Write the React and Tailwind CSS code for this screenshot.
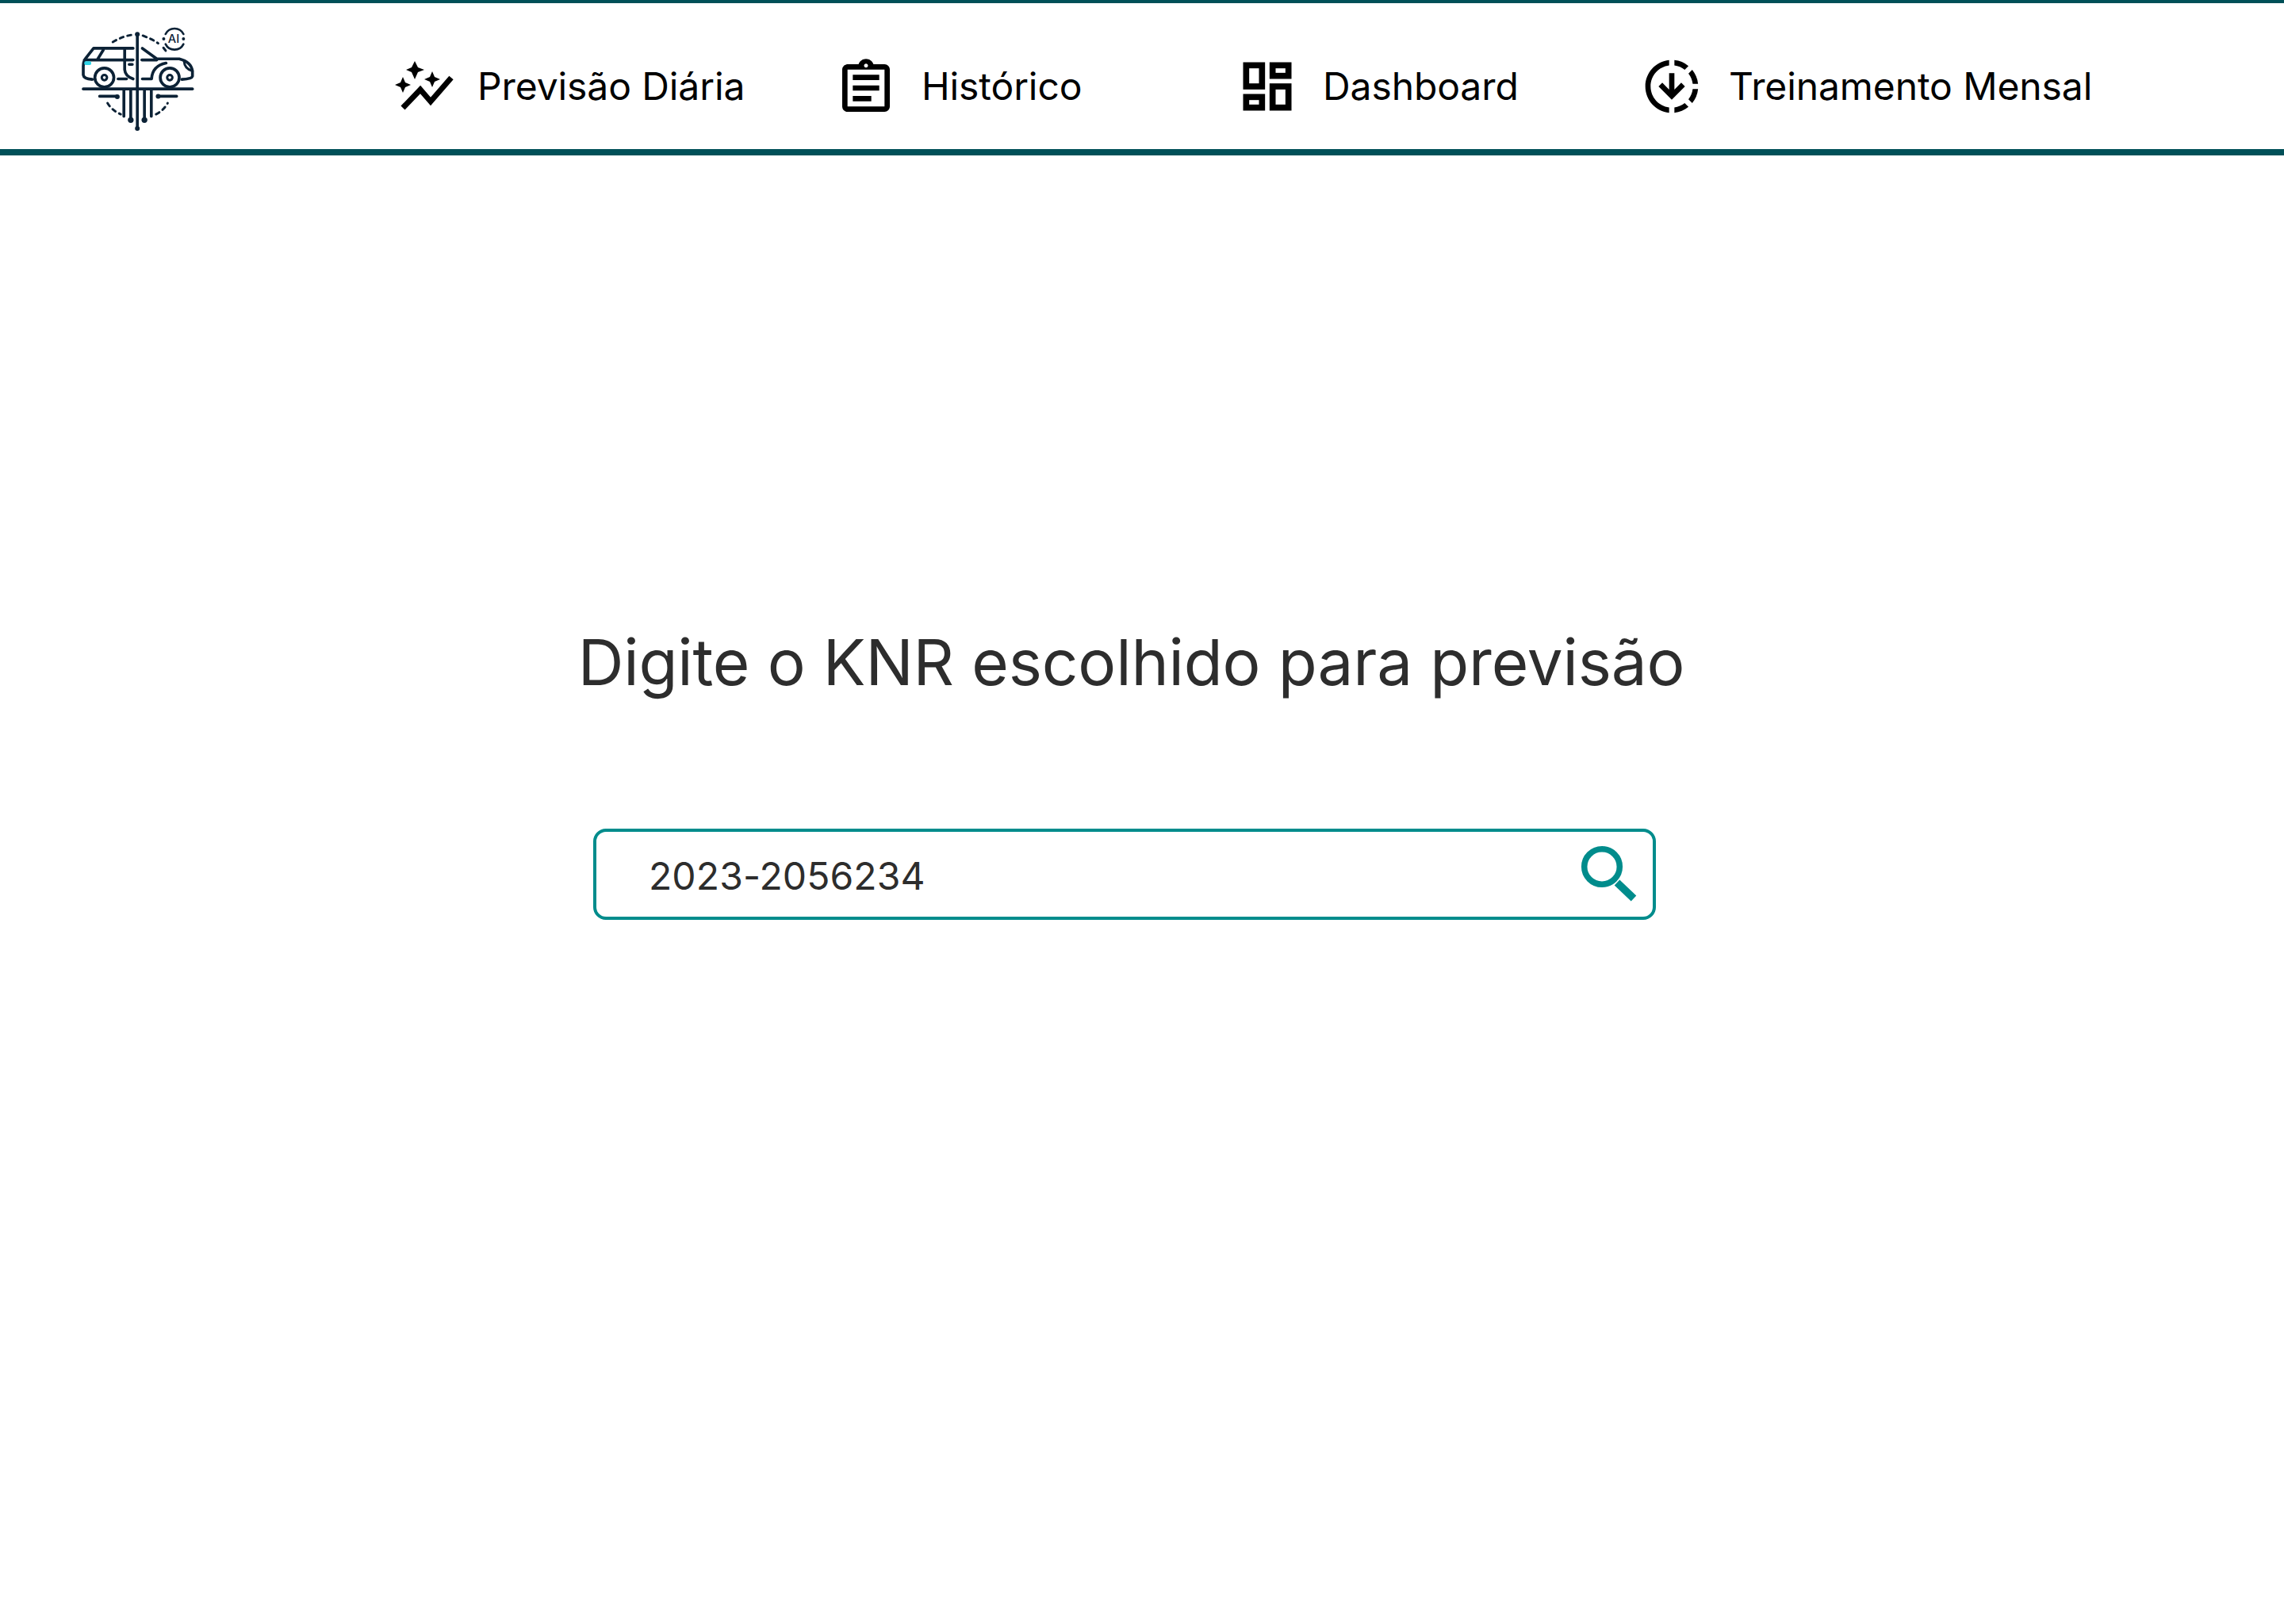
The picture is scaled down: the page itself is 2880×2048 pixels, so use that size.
import React from 'react';
import { MdOutlineAssignment, MdOutlineDownloading } from 'react-icons/md';

function Logo() {
  return (
    <svg viewBox="130 100 430 400" className="w-[143px] h-[133px] shrink-0" fill="none" stroke="#0c2236" strokeWidth="11" strokeLinecap="round" strokeLinejoin="round">
      {/* dashed arc */}
      <path d="M248 160 Q290 135 330 132 M362 136 Q400 150 420 165 M440 182 L456 203" strokeWidth="9" strokeDasharray="14 16" />
      <path d="M228 392 Q245 420 278 434 M412 434 Q440 420 456 392" strokeWidth="9" strokeDasharray="14 16" />
      {/* centre line */}
      <path d="M341 132 V488" />
      <circle cx="341" cy="131" r="9" fill="#0c2236" stroke="none" />
      <circle cx="341" cy="488" r="9" fill="#0c2236" stroke="none" />
      {/* car left half */}
      <path d="M325 184 H175 L145 222 Q136 234 136 252 V285 Q138 300 170 302 M212 190 L190 226 M140 228 H325 M293 190 V265 Q295 290 325 300 M310 245 H322" />
      <path d="M268 300 H300" />
      <circle cx="216" cy="295" r="36" fill="#fff" />
      <circle cx="216" cy="295" r="10" strokeWidth="9" />
      <rect x="140" y="233" width="26" height="14" rx="5" fill="#2fd5e8" stroke="none" />
      {/* car right half */}
      <path d="M360 184 L415 224 H500 Q545 235 550 270 V290 Q548 300 510 302 M358 228 H415 M360 300 H395 Q398 250 450 240" />
      <path d="M518 232 Q520 262 550 270" strokeWidth="9" />
      <circle cx="464" cy="295" r="36" fill="#fff" />
      <circle cx="464" cy="295" r="10" strokeWidth="9" />
      {/* circuit lines */}
      <path d="M136 338 H550" />
      <path d="M290 340 V442 M316 340 V456 M368 340 V456 M394 340 V442" />
      <path d="M198 366 H264 M420 366 H490" />
      <circle cx="265" cy="368" r="9" fill="#0c2236" stroke="none" />
      <circle cx="420" cy="366" r="9" fill="#0c2236" stroke="none" />
      <circle cx="316" cy="456" r="11" fill="#0c2236" stroke="none" />
      <circle cx="368" cy="456" r="11" fill="#0c2236" stroke="none" />
      {/* AI badge */}
      <path d="M448 130 A38 38 0 0 1 516 130 M516 168 A38 38 0 0 1 448 168" strokeWidth="8" />
      <circle cx="441" cy="148" r="6" fill="#0c2236" stroke="none" />
      <circle cx="516" cy="148" r="6" fill="#0c2236" stroke="none" />
      <text x="479" y="164" textAnchor="middle" fontFamily="Inter, sans-serif" fontSize="44" fontWeight="500" fill="#0c2236" stroke="none">AI</text>
    </svg>
  );
}

function AutoGraphIcon() {
  return (
    <svg viewBox="5 10 80 80" className="w-[80px] h-[80px] shrink-0" fill="#000">
      <path d="M33 18 L37 26 L45 29 L37 32 L33 41 L29 32 L22 29 L29 26 Z" />
      <path d="M55 31 L58 38 L65 41 L58 44 L55 51 L52 44 L45 41 L52 38 Z" />
      <path d="M18 38 L21 45 L28 48 L21 51 L18 58 L15 51 L8 48 L15 45 Z" />
      <path d="M18 77 L40 54 L53 69 L79 39" fill="none" stroke="#000" strokeWidth="7" />
    </svg>
  );
}

function DashboardIcon() {
  return (
    <svg viewBox="0 0 24 24" className="w-[80px] h-[80px] shrink-0" fill="none" stroke="#000" strokeWidth="2.3">
      <rect x="4" y="4" width="6" height="8" />
      <rect x="14" y="4" width="6" height="4" />
      <rect x="4" y="16" width="6" height="4" />
      <rect x="14" y="12" width="6" height="8" />
    </svg>
  );
}

function SearchIcon() {
  return (
    <svg viewBox="0 0 96 96" className="w-[96px] h-[96px] shrink-0" fill="none" stroke="#008c8c">
      <circle cx="38" cy="38" r="22.3" strokeWidth="7.5" />
      <path d="M57 58 L78 78" strokeWidth="9.5" />
    </svg>
  );
}

const navItems = [
  { icon: <AutoGraphIcon />, label: 'Previsão Diária', width: 'w-[557px]', gap: 'gap-[27px]' },
  { icon: <MdOutlineAssignment className="w-[80px] h-[80px] shrink-0 mt-[4px]" />, label: 'Histórico', width: 'w-[506px]', gap: 'gap-[30px]' },
  { icon: <DashboardIcon />, label: 'Dashboard', width: 'w-[510px]', gap: 'gap-[30px]' },
  { icon: <MdOutlineDownloading className="w-[80px] h-[80px] shrink-0" />, label: 'Treinamento Mensal', width: 'w-auto', gap: 'gap-[32px]' },
];

export default function App() {
  return (
    <div className="min-h-screen bg-white" style={{ fontFamily: 'Inter, sans-serif' }}>
      {/* Header */}
      <header className="h-[196px] border-t-4 border-b-8 border-[#005058] flex items-start">
        <div className="pl-[103px] pt-[29px] w-[495px] shrink-0">
          <Logo />
        </div>
        <nav className="flex items-center pt-[63px]">
          {navItems.map((item) => (
            <div key={item.label} className={`flex items-center ${item.gap} ${item.width}`}>
              {item.icon}
              <span className="text-[48px] leading-[72px] tracking-[-0.1px] text-black whitespace-nowrap">{item.label}</span>
            </div>
          ))}
        </nav>
      </header>

      {/* Search */}
      <main className="flex flex-col items-center pt-[579px]">
        <div className="pr-[27px]">
          <h1 className="text-[80px] leading-[120px] tracking-[-0.15px] font-normal text-[#2d2d2d] whitespace-nowrap">Digite o KNR escolhido para previsão</h1>
        </div>
        <div className="pr-[44px] mt-[150px]">
          <div className="w-[1340px] h-[115px] border-4 border-[#008c8c] rounded-[16px] flex items-center justify-between pl-[65px] pr-[6px]">
            <span className="text-[48px] pt-[4px] pl-[1px] tracking-[0.1px] text-[#2d2d2d]">2023-2056234</span>
            <SearchIcon />
          </div>
        </div>
      </main>
    </div>
  );
}
